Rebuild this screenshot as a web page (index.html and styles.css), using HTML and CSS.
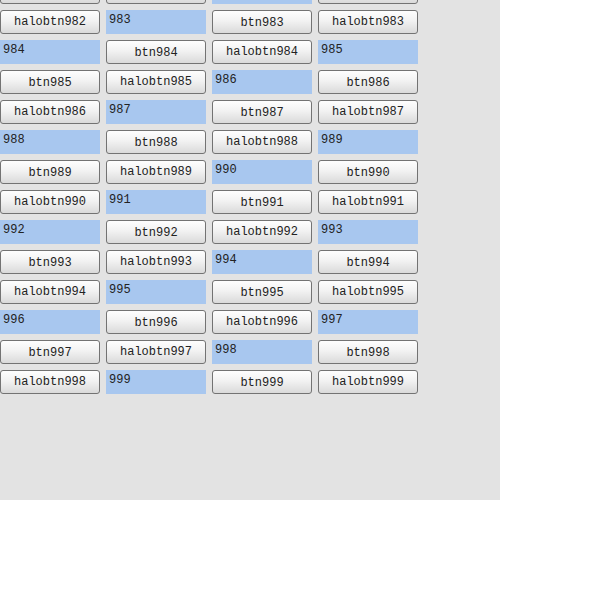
FILE: index.html
```html
<!DOCTYPE html>
<html>
<head>
<meta charset="utf-8">
<link rel="stylesheet" href="styles.css">
</head>
<body>
<div class="pane">
  <div class="grid" id="grid"></div>
</div>
<script src="app.js"></script>
</body>
</html>
```
FILE: styles.css
```css
html, body { margin: 0; padding: 0; background: #ffffff; }
.pane {
  width: 500px;
  height: 500px;
  background: #e3e3e3;
  overflow: hidden;
}
.grid {
  display: grid;
  grid-template-columns: repeat(4, 100px);
  grid-auto-rows: 24px;
  column-gap: 6px;
  row-gap: 6px;
  margin-top: -20px;
}
.label {
  background: #a8c7ef;
  font-family: "Liberation Mono", monospace;
  font-size: 12px;
  color: #222;
  padding: 3px 3px;
  box-sizing: border-box;
  line-height: 14px;
}
.btn {
  box-sizing: border-box;
  border: 1px solid #737373;
  border-radius: 3px;
  background: linear-gradient(#fefefe, #f2f2f2 45%, #dadada);
  font-family: "Liberation Mono", monospace;
  font-size: 12px;
  color: #222;
  display: flex;
  align-items: center;
  justify-content: center;
  line-height: 14px;
}
.btn.plain { padding-top: 2px; }
.btn.halo { padding-bottom: 1px; }
```
FILE: app.js
```js
var g = document.getElementById('grid');
function add(cls, text) {
  var d = document.createElement('div');
  d.className = cls;
  d.textContent = text;
  g.appendChild(d);
}
add('btn plain', 'btn981');
add('btn halo', 'halobtn981');
for (var n = 982; n <= 999; n++) {
  add('label', String(n));
  add('btn plain', 'btn' + n);
  add('btn halo', 'halobtn' + n);
}
```
